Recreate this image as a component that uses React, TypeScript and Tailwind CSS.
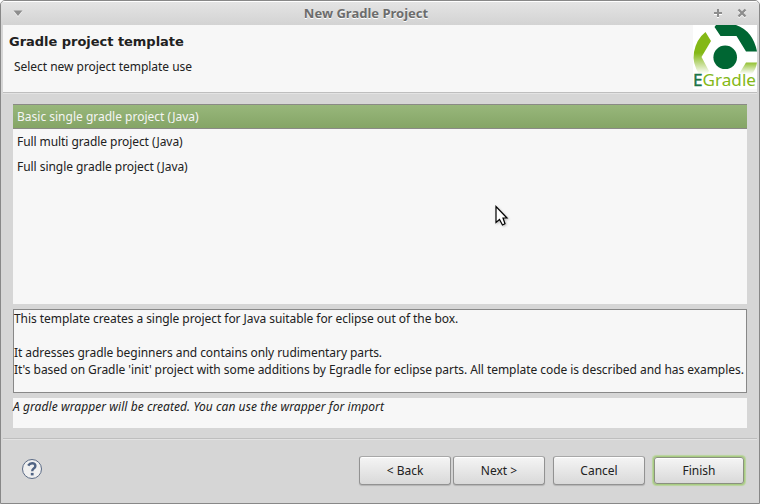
import React from 'react';

const templates = [
  { name: 'Basic single gradle project (Java)', spacing: 'tracking-[0px]' },
  { name: 'Full multi gradle project (Java)', spacing: 'tracking-[-0.075px]' },
  { name: 'Full single gradle project (Java)', spacing: 'tracking-[-0.05px]' },
];

function Logo() {
  return (
    <svg className="block size-16 overflow-visible" viewBox="0 0 64 64">
      <defs>
        <linearGradient id="fade" gradientUnits="userSpaceOnUse" x1="0" y1="28" x2="0" y2="49">
          <stop offset="0" stopColor="#84b816" />
          <stop offset="1" stopColor="#ffffff" />
        </linearGradient>
        <linearGradient id="fadeRight" gradientUnits="userSpaceOnUse" x1="0" y1="36" x2="0" y2="49">
          <stop offset="0" stopColor="#84b816" />
          <stop offset="1" stopColor="#ffffff" />
        </linearGradient>
      </defs>
      <rect width="64" height="64" fill="#fff" />
      <path d="M23 0H43Q60 6 64 26.5H53L43.5 11H27.5L21.5 2Z" fill="#006633" />
      <path d="M12.5 7L18 16L8.5 32L16 46L14 49H6Q-1 38 1 27Q3.5 14 12.5 7Z" fill="url(#fade)" />
      <path d="M53 37.5H64Q63 44 59 49H46Z" fill="url(#fadeRight)" />
      <circle cx="32.2" cy="32.3" r="11.8" fill="#006633" />
      <text x="0" y="61" fontFamily="Noto Sans, sans-serif" fontSize="16.8" textLength="63" lengthAdjust="spacingAndGlyphs">
        <tspan fill="#1d7547" stroke="#1d7547" strokeWidth="0.4">E</tspan><tspan fill="#84b816">Gradle</tspan>
      </text>
    </svg>
  );
}

function Button({ label, primary = false }: { label: string; primary?: boolean }) {
  return (
    <button
      className={
        'rounded-[3px] border bg-linear-to-b from-[#f5f5f5] to-[#d9d9d9] text-[12px] ' +
        (primary
          ? 'mx-px h-[27px] w-[90px] border-[#8a9080] leading-[25px] shadow-[inset_0_1px_0_#fff,0_0_0_1px_#a8cc82,0_0_1px_1.5px_#b9d39d]'
          : 'h-[29px] w-[92px] border-[#929292] border-t-[#a8a8a8] leading-[27px] shadow-[inset_0_1px_0_#fff,0_1px_1px_#b4b4b4]')
      }
    >
      {label}
    </button>
  );
}

export default function App() {
  return (
    <div className="relative flex h-[504px] w-[760px] flex-col overflow-hidden rounded-t-[5px] border border-[#888888] bg-[#d6d6d6] font-['Noto_Sans',sans-serif] text-[12px] text-[#212121]">
      <header className="flex h-6 shrink-0 items-center border-t border-white bg-linear-to-b from-[#e4e4e4] to-[#d3d3d3] text-[#6c6c6c]">
        <svg className="mb-[2px] ml-3 h-2 w-[10px]" viewBox="0 0 10 8">
          <path d="M0.5 2.5H9.5L5 8Z" fill="#f4f4f4" />
          <path d="M0.5 1.5H9.5L5 7Z" fill="#8d8d8d" />
        </svg>
        <h1 className="flex-1 pr-[4px] text-center text-[13px] font-bold [text-shadow:0_1px_0_#fff]">New Gradle Project</h1>
        <svg className="mr-[6px] mb-[1px] h-4 w-10" viewBox="0 0 40 16">
          <path d="M1 9H9M5 5V13" stroke="#fff" strokeWidth="2" />
          <path d="M1 8H9M5 4V12" stroke="#8d8d8d" strokeWidth="2" />
          <path d="M25.5 5.5L32.5 12.5M32.5 5.5L25.5 12.5" stroke="#f8f8f8" strokeWidth="2.4" />
          <path d="M25.5 4.5L32.5 11.5M32.5 4.5L25.5 11.5" stroke="#8d8d8d" strokeWidth="2.4" />
        </svg>
      </header>
      <section className="mx-[2px] flex h-[67px] shrink-0 justify-between bg-[#f7f7f7]">
        <div className="pt-[8px] pl-[6px]">
          <h2 className="font-['DejaVu_Sans',sans-serif] text-[13px] leading-[17px] font-bold tracking-[-0.03px]">Gradle project template</h2>
          <p className="mt-[8px] ml-[5px] leading-[17px] tracking-[-0.035px]">Select new project template use</p>
        </div>
        <Logo />
      </section>
      <div className="mx-[2px] h-[2px] shrink-0 border-t border-[#bebebe] bg-[#e3e3e3]" />
      <main className="flex shrink-0 flex-col px-3 pt-[10px]">
        <ul className="h-[200px] bg-[#f7f7f7]">
          {templates.map((t, i) => (
            <li
              key={t.name}
              className={
                'h-[25px] pl-1 ' +
                (i === 0
                  ? 'border-y border-[#8a8a85] bg-linear-to-b from-[#98b77b] to-[#85a566] leading-[23px] text-[#f5f5f5] '
                  : 'leading-[25px] ') +
                t.spacing
              }
            >
              {t.name}
            </li>
          ))}
        </ul>
        <div className="mt-[5px] h-[84px] border border-[#888] bg-[#f7f7f7] leading-[17px] whitespace-nowrap">
          <p className="tracking-[-0.06px]">This template creates a single project for Java suitable for eclipse out of the box.</p>
          <p className="mt-[17px] tracking-[-0.06px]">It adresses gradle beginners and contains only rudimentary parts.</p>
          <p className="tracking-[-0.05px]">It's based on Gradle 'init' project with some additions by Egradle for eclipse parts. All template code is described and has examples.</p>
        </div>
        <p className="mt-[5px] h-[30px] bg-[#f7f7f7] leading-[17px] tracking-[0.067px] italic">A gradle wrapper will be created. You can use the wrapper for import</p>
      </main>
      <div className="mx-[2px] mt-[10px] h-[2px] shrink-0 border-t border-[#bebebe] bg-[#e3e3e3]" />
      <footer className="flex h-[62px] shrink-0 items-center pr-[14px] pb-[2px] pl-5">
        <svg className="mr-auto mb-[2px] size-[22px]" viewBox="0 0 22 22">
          <circle cx="11" cy="11" r="9.5" fill="#f0f0f0" stroke="#5b6b86" />
          <path d="M7.2 7.6Q8.6 5.3 11.1 5.3Q14.4 5.3 14.4 7.9Q14.4 9.4 12.7 10.5Q11.2 11.5 11.2 13.3" fill="none" stroke="#506484" strokeWidth="2.4" />
          <rect x="9.8" y="14.9" width="2.8" height="2.5" fill="#506484" />
        </svg>
        <div className="flex items-center gap-[2px]">
          <Button label="< Back" />
          <Button label="Next >" />
        </div>
        <div className="ml-2 flex items-center gap-2">
          <Button label="Cancel" />
          <Button label="Finish" primary />
        </div>
      </footer>
      <svg className="absolute top-[204px] left-[494px] h-6 w-4 drop-shadow-[1px_1px_1px_rgba(0,0,0,0.25)]" viewBox="0 0 16 24">
        <path d="M1 1.5V17.5L4.5 14.5L7.5 20L10 18.8L8 13H12Z" fill="#fff" stroke="#000" strokeWidth="1.2" />
      </svg>
    </div>
  );
}
